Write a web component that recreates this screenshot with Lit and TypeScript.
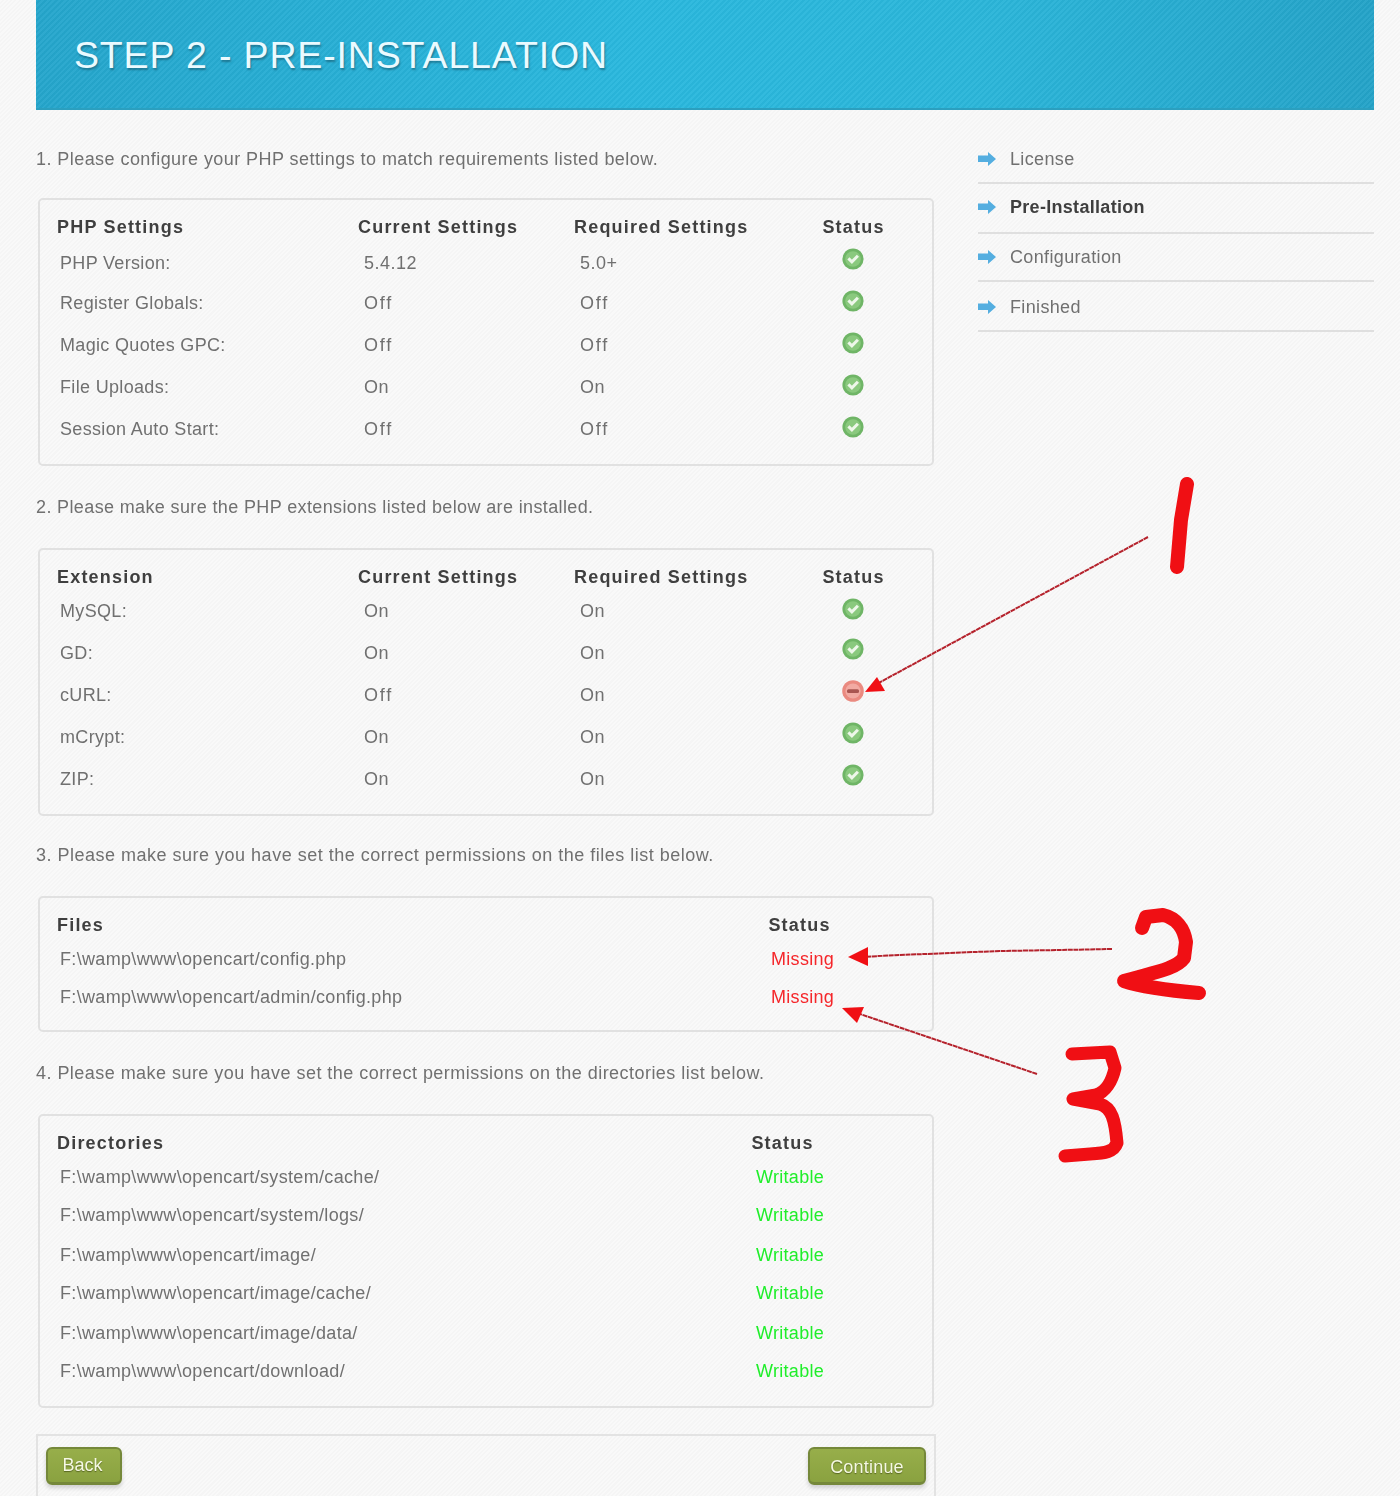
import { LitElement, html, css, svg } from "lit";
import { customElement } from "lit/decorators.js";

type Row = { cells: string[]; h: number; status?: string; shift?: number };
type Section = {
  note: string; ls: number; top: number; boxTop: number; boxH: number; cols: string; head: string[]; rows: Row[];
};

const P4 = (a: string, b: string, c: string, h: number, shift: number, status = "ok"): Row => ({
  cells: [a, b, c], h, shift, status,
});
const F = (a: string, s: string, h: number): Row => ({ cells: [a], h, status: s });

const sections: Section[] = [
  {
    note: "1. Please configure your PHP settings to match requirements listed below.",
    ls: 0.44, top: 39, boxTop: 29, boxH: 268, cols: "c4",
    head: ["PHP Settings", "Current Settings", "Required Settings", "Status"],
    rows: [
      P4("PHP Version:", "5.4.12", "5.0+", 36, 4),
      P4("Register Globals:", "Off", "Off", 40, 2),
      P4("Magic Quotes GPC:", "Off", "Off", 42, 2),
      P4("File Uploads:", "On", "On", 42, 2),
      P4("Session Auto Start:", "Off", "Off", 42, 2),
    ],
  },
  {
    note: "2. Please make sure the PHP extensions listed below are installed.",
    ls: 0.37, top: 31, boxTop: 31, boxH: 268, cols: "c4",
    head: ["Extension", "Current Settings", "Required Settings", "Status"],
    rows: [
      P4("MySQL:", "On", "On", 34, 2),
      P4("GD:", "On", "On", 42, 4),
      P4("cURL:", "Off", "On", 42, 4, "bad"),
      P4("mCrypt:", "On", "On", 42, 4),
      P4("ZIP:", "On", "On", 42, 4),
    ],
  },
  {
    note: "3. Please make sure you have set the correct permissions on the files list below.",
    ls: 0.5, top: 29, boxTop: 31, boxH: 136, cols: "files",
    head: ["Files", "Status"],
    rows: [
      F("F:\\wamp\\www\\opencart/config.php", "Missing", 34),
      F("F:\\wamp\\www\\opencart/admin/config.php", "Missing", 38),
    ],
  },
  {
    note: "4. Please make sure you have set the correct permissions on the directories list below.",
    ls: 0.46, top: 31, boxTop: 31, boxH: 294, cols: "dirs",
    head: ["Directories", "Status"],
    rows: [
      F("F:\\wamp\\www\\opencart/system/cache/", "Writable", 34),
      F("F:\\wamp\\www\\opencart/system/logs/", "Writable", 38),
      F("F:\\wamp\\www\\opencart/image/", "Writable", 40),
      F("F:\\wamp\\www\\opencart/image/cache/", "Writable", 38),
      F("F:\\wamp\\www\\opencart/image/data/", "Writable", 40),
      F("F:\\wamp\\www\\opencart/download/", "Writable", 38),
    ],
  },
];

const steps = [
  { t: "License", h: 35, pad: 0 },
  { t: "Pre-Installation", h: 50, pad: 15, on: true },
  { t: "Configuration", h: 48, pad: 13 },
  { t: "Finished", h: 50, pad: 13 },
];

const okIcon = svg`<svg class="ico" viewBox="0 0 22 22" width="22" height="22">
  <circle cx="11" cy="11" r="10.6" fill="#6fb566"/>
  <circle cx="11" cy="11" r="7.8" fill="#8ac97e"/>
  <path d="M6.4 10.4l3.5 3.5 6-6.200" fill="none" stroke="#eef7ea" stroke-width="3"/>
</svg>`;
const badIcon = svg`<svg class="ico" viewBox="0 0 22 22" width="22" height="22">
  <circle cx="11" cy="11" r="10.800" fill="#ea8a80"/>
  <circle cx="11" cy="11" r="7.600" fill="#f2aaa2"/>
  <rect x="5" y="9.200" width="12" height="3.800" rx="1.500" fill="#a95550"/>
</svg>`;
const arrowIcon = svg`<svg class="arr" viewBox="0 0 18 16" width="18" height="16">
  <path d="M0 4.500h10V1l8 7-8 7v-4H0z" fill="#54aee0"/>
</svg>`;

@customElement("app-root")
export class AppRoot extends LitElement {
  static styles = css`
    :host {
      display: block; position: relative; height: 1496px; overflow: hidden;
      font-family: "Liberation Sans", Arial, sans-serif;
      font-size: 18px; line-height: 20px; color: #707070;
      background-color: #f7f7f7;
      background-image: repeating-linear-gradient(135deg, #f9f9f9 0 1.5px, #f5f5f5 1.5px 3px);
      padding: 0 26px 0 36px; box-sizing: border-box;
    }
    .soft { filter: blur(0.35px); }
    .banner {
      height: 110px; display: flex; align-items: center; padding: 2px 0 0 38px;
      background-color: #27aed4;
      background-image:
        repeating-linear-gradient(135deg, rgba(255,255,255,.04) 0 2px, rgba(0,0,0,.025) 2px 4px),
        linear-gradient(90deg, #25a6cc 0%, #2ab8de 45%, #2bb6da 70%, #24a3c8 100%);
      border-bottom: 2px solid #2b9fbf; box-sizing: border-box;
      color: #eafaff; font-size: 37.5px; letter-spacing: .85px;
      text-shadow: 1px 2px 2px rgba(20,80,100,.55);
    }
    .main { display: grid; grid-template-columns: 898px 396px; column-gap: 44px; }
    .box {
      margin-left: 2px; border: 2px solid #e1e1e1; border-radius: 5px;
      box-sizing: border-box; padding: 17px 0 0 17px;
    }
    .row { display: grid; align-items: end; }
    .c4 { grid-template-columns: 301px 216px 248px 63px; }
    .files { grid-template-columns: 711px 63px; }
    .dirs { grid-template-columns: 694px 63px; }
    .th { font-weight: 700; color: #3f3f3f; letter-spacing: 1.2px; white-space: nowrap; }
    .st { display: flex; justify-content: center; }
    .iconcell { padding-right: 1px; }
    .td { white-space: nowrap; letter-spacing: .33px; }
    .td.first { padding-left: 3px; }
    .c4 .td:not(.first) { padding-left: 6px; letter-spacing: .5px; }
    .c4 .td.off:not(.first) { letter-spacing: 1.8px; }
    .ico { display: block; }
    .missing { color: #f5262a; padding-left: 3px; letter-spacing: .3px; }
    .writable { color: #1fee2a; padding-left: 5px; letter-spacing: .3px; }
    .side { padding-top: 39px; }
    .step {
      display: flex; align-items: flex-end; box-sizing: border-box;
      border-bottom: 2px solid #dfdfdf; letter-spacing: .35px;
    }
    .step span { display: flex; align-items: center; height: 20px; gap: 14px; }
    .step.on { color: #3f3f3f; font-weight: 700; letter-spacing: .3px; }
    .step:first-child { align-items: flex-start; }
    .arr { display: block; }
    .foot {
      width: 900px; height: 90px; margin-top: 26px; box-sizing: border-box;
      border: 2px solid #e3e3e3; border-bottom: 0; padding: 11px 8px 0;
      display: flex; justify-content: space-between; align-items: flex-start;
    }
    .btn {
      height: 38px; box-sizing: border-box; border-radius: 6px;
      border: 2px solid #75883a; border-bottom-width: 3px;
      background: linear-gradient(#97ae4a, #8aa240);
      box-shadow: 0 3px 4px rgba(0,0,0,.16);
      color: #f6f9e4; text-shadow: 0 1px 1px rgba(50,60,10,.6);
      display: flex; align-items: center; justify-content: center;
    }
    .back { width: 76px; padding-right: 3px; padding-bottom: 2px; }
    .next { width: 118px; letter-spacing: .2px; padding-top: 3px; }
    .marks { position: absolute; left: 0; top: 0; pointer-events: none; }
  `;

  private statusCell(r: Row) {
    if (r.status === "ok" || r.status === "bad") {
      return html`<div class="st iconcell" style="margin-bottom:${(r.shift ?? 0) - 1}px">
        ${r.status === "ok" ? okIcon : badIcon}</div>`;
    }
    const cls = r.status === "Missing" ? "missing" : "writable";
    return html`<div class="td ${cls}">${r.status}</div>`;
  }

  private renderSection(s: Section) {
    return html`
      <div style="margin-top:${s.top}px;letter-spacing:${s.ls}px">${s.note}</div>
      <div class="box" style="height:${s.boxH}px;margin-top:${s.boxTop}px">
        <div class="row ${s.cols}">
          ${s.head.map((h, i) => html`<div class="th ${i === s.head.length - 1 ? "st" : ""}">${h}</div>`)}
        </div>
        ${s.rows.map((r) => html`
          <div class="row ${s.cols}" style="height:${r.h}px">
            ${r.cells.map((c, i) => html`<div class="td ${i === 0 ? "first" : ""} ${c === "Off" ? "off" : ""}">${c}</div>`)}
            ${this.statusCell(r)}
          </div>`)}
      </div>`;
  }

  render() {
    return html`
      <div class="banner">STEP 2 - PRE-INSTALLATION</div>
      <div class="main soft">
        <div>
          ${sections.map((s) => this.renderSection(s))}
          <div class="foot">
            <div class="btn back">Back</div>
            <div class="btn next">Continue</div>
          </div>
        </div>
        <div class="side">
          ${steps.map((s) => html`
            <div class="step ${s.on ? "on" : ""}" style="height:${s.h}px;padding-bottom:${s.pad}px">
              <span>${arrowIcon}${s.t}</span>
            </div>`)}
        </div>
      </div>
      <svg class="marks" width="1400" height="1496" viewBox="0 0 1400 1496">
        <g fill="none" stroke="#b5222c" stroke-width="2" stroke-dasharray="5 0.6">
          <path d="M1148 537L873 686"/>
          <path d="M1112 949L1060 950L1000 951L900 955L860 957"/>
          <path d="M1037 1074L860 1014"/>
        </g>
        <g fill="#f00f14">
          <path d="M865 692L877 677L885 691Z"/>
          <path d="M848 957L868 947L868 966Z"/>
          <path d="M842 1008L864 1007L857 1023Z"/>
        </g>
        <g fill="none" stroke="#f00f14" stroke-linecap="round" stroke-linejoin="round">
          <path stroke-width="14" d="M1187 484L1181 520L1177 567"/>
          <path stroke-width="14" d="M1142 928L1146 917L1163 915C1176 918 1184 928 1186 942L1184 958C1175 970 1150 973 1124 981C1145 988 1175 991 1199 993"/>
          <path stroke-width="13" d="M1072 1054L1110 1052L1115 1068C1112 1082 1105 1092 1096 1095L1073 1099L1100 1104C1112 1108 1115 1120 1117 1143C1114 1152 1105 1153 1090 1154L1065 1156"/>
        </g>
      </svg>
    `;
  }
}
